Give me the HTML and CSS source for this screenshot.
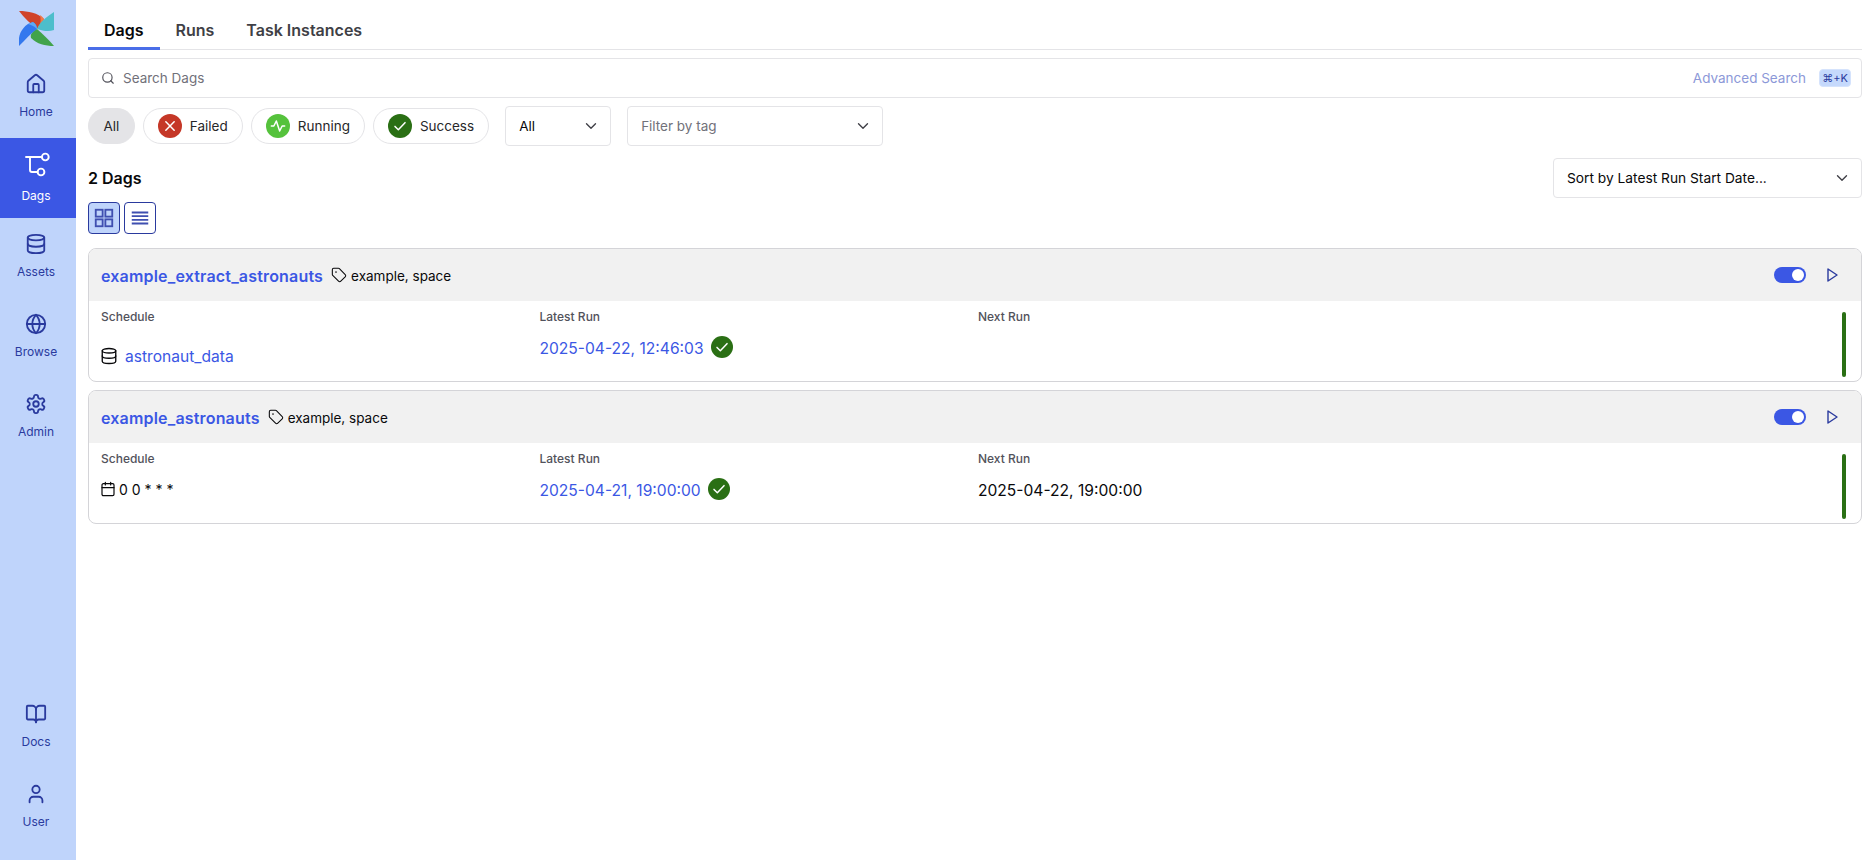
FILE: index.html
```html
<!DOCTYPE html>
<html lang="en">
<head>
    <meta charset="UTF-8">
    <title>Dags</title>
    <link rel="stylesheet" href="styles.css">
</head>
<body>
    <nav class="sidebar">
        <svg class="logo" viewBox="0 0 36 36">
            <path fill="#d0432a" d="M0 0C9 0 19 2 25 8C23 12 20 15 18 18C12 13 5 7 0 0Z"/>
            <path fill="#ef7a4a" d="M21 4C23 5 24 7 25 8C24 11 22 14 20 16C22 12 22 8 21 4Z"/>
            <path fill="#4dbecb" d="M35 1V19C30 21 24 20 18 18C20 12 27 6 35 1Z"/>
            <path fill="#41a34b" d="M35 35C26 35 18 33 12 27C11 24 13 20 18 18C24 23 30 29 35 35Z"/>
            <path fill="#3378ee" d="M0 35V27C1 20 6 13 14 11C17 13 18 15 18 18C12 22 6 29 0 35Z"/>
            <path fill="#5fa9f5" d="M9 13C11 12 13 11 14 11C17 13 18 15 18 18C15 15 12 14 9 13Z"/>
        </svg>
        <a class="nav-item">
            <svg class="nav-icon" viewBox="0 0 24 24"><path d="M15 21v-8a1 1 0 0 0-1-1h-4a1 1 0 0 0-1 1v8"/><path d="M3 10a2 2 0 0 1 .7-1.5l7-6a2 2 0 0 1 2.6 0l7 6A2 2 0 0 1 21 10v9a2 2 0 0 1-2 2H5a2 2 0 0 1-2-2z"/></svg>
            <span>Home</span>
        </a>
        <a class="nav-item active">
            <svg class="nav-icon big" viewBox="0 0 28 28"><circle cx="23.3" cy="7" r="3.4"/><circle cx="19" cy="22" r="3.4"/><path d="M4 7H19.9M8 7V20a2 2 0 0 0 2 2H15.600"/></svg>
            <span>Dags</span>
        </a>
        <a class="nav-item">
            <svg class="nav-icon" viewBox="0 0 24 24"><ellipse cx="12" cy="5" rx="9" ry="3"/><path d="M3 5V19A9 3 0 0 0 21 19V5"/><path d="M3 12A9 3 0 0 0 21 12"/></svg>
            <span>Assets</span>
        </a>
        <a class="nav-item">
            <svg class="nav-icon" viewBox="0 0 24 24"><circle cx="12" cy="12" r="10"/><path d="M12 2a14.5 14.5 0 0 0 0 20 14.5 14.5 0 0 0 0-20"/><path d="M2 12h20"/></svg>
            <span>Browse</span>
        </a>
        <a class="nav-item">
            <svg class="nav-icon" viewBox="0 0 24 24"><path d="M12.22 2h-.44a2 2 0 0 0-2 2v.18a2 2 0 0 1-1 1.73l-.43.25a2 2 0 0 1-2 0l-.15-.08a2 2 0 0 0-2.73.73l-.22.38a2 2 0 0 0 .73 2.73l.15.1a2 2 0 0 1 1 1.72v.51a2 2 0 0 1-1 1.74l-.15.09a2 2 0 0 0-.73 2.73l.22.38a2 2 0 0 0 2.73.73l.15-.08a2 2 0 0 1 2 0l.43.25a2 2 0 0 1 1 1.73V20a2 2 0 0 0 2 2h.44a2 2 0 0 0 2-2v-.18a2 2 0 0 1 1-1.73l.43-.25a2 2 0 0 1 2 0l.15.08a2 2 0 0 0 2.73-.73l.22-.39a2 2 0 0 0-.73-2.73l-.15-.08a2 2 0 0 1-1-1.74v-.5a2 2 0 0 1 1-1.74l.15-.09a2 2 0 0 0 .73-2.73l-.22-.38a2 2 0 0 0-2.73-.73l-.15.08a2 2 0 0 1-2 0l-.43-.25a2 2 0 0 1-1-1.73V4a2 2 0 0 0-2-2z"/><circle cx="12" cy="12" r="3"/></svg>
            <span>Admin</span>
        </a>
        <div class="nav-bottom">
            <a class="nav-item">
                <svg class="nav-icon" viewBox="0 0 24 24"><path d="M12 7v14"/><path d="M3 18a1 1 0 0 1-1-1V4a1 1 0 0 1 1-1h5a4 4 0 0 1 4 4 4 4 0 0 1 4-4h5a1 1 0 0 1 1 1v13a1 1 0 0 1-1 1h-6a3 3 0 0 0-3 3 3 3 0 0 0-3-3z"/></svg>
                <span>Docs</span>
            </a>
            <a class="nav-item">
                <svg class="nav-icon" viewBox="0 0 24 24"><path d="M19 21v-2a4 4 0 0 0-4-4H9a4 4 0 0 0-4 4v2"/><circle cx="12" cy="7" r="4"/></svg>
                <span>User</span>
            </a>
        </div>
    </nav>

    <main class="main">
        <div class="tabs">
            <a class="tab active">Dags</a>
            <a class="tab">Runs</a>
            <a class="tab">Task Instances</a>
        </div>

        <div class="search">
            <svg class="search-icon" viewBox="0 0 24 24"><circle cx="11" cy="11" r="8"/><path d="m21 21-4.3-4.3"/></svg>
            <span class="placeholder">Search Dags</span>
            <span class="advanced">Advanced Search</span>
            <kbd class="kbd">⌘+K</kbd>
        </div>

        <div class="filters">
            <button class="chip chip-all">All</button>
            <button class="chip">
                <span class="state failed"><svg viewBox="0 0 24 24"><path d="M7 7l10 10M17 7L7 17"/></svg></span>Failed
            </button>
            <button class="chip">
                <span class="state running"><svg viewBox="0 0 24 24"><path d="M4 12h3l3-6 4 12 3-6h3"/></svg></span>Running
            </button>
            <button class="chip">
                <span class="state success"><svg viewBox="0 0 24 24"><path d="M6 12.500l4 4 8-8.500"/></svg></span>Success
            </button>
            <div class="select select-all">
                <span>All</span>
                <svg class="chevron" viewBox="0 0 24 24"><path d="m6 9 6 6 6-6"/></svg>
            </div>
            <div class="select select-tag">
                <span class="placeholder">Filter by tag</span>
                <svg class="chevron" viewBox="0 0 24 24"><path d="m6 9 6 6 6-6"/></svg>
            </div>
        </div>

        <div class="list-head">
            <h2 class="count">2 Dags</h2>
            <div class="select select-sort">
                <span>Sort by Latest Run Start Date...</span>
                <svg class="chevron" viewBox="0 0 24 24"><path d="m6 9 6 6 6-6"/></svg>
            </div>
        </div>

        <div class="view-toggle">
            <button class="view-btn active">
                <svg viewBox="0 0 24 24"><rect x="3" y="3" width="7.500" height="7.500"/><rect x="13.500" y="3" width="7.500" height="7.500"/><rect x="3" y="13.500" width="7.500" height="7.500"/><rect x="13.500" y="13.500" width="7.500" height="7.500"/></svg>
            </button>
            <button class="view-btn">
                <svg viewBox="0 0 24 24"><path d="M3 6h18M3 10h18M3 14h18M3 18h18"/></svg>
            </button>
        </div>

        <section class="card">
            <header class="card-head">
                <a class="dag-name">example_extract_astronauts</a>
                <svg class="tag-icon" viewBox="0 0 24 24"><path d="M12.6 2.600A2 2 0 0 0 11.200 2H4a2 2 0 0 0-2 2v7.200a2 2 0 0 0 .6 1.400l8.700 8.700a2.400 2.400 0 0 0 3.400 0l6.600-6.600a2.400 2.400 0 0 0 0-3.400z"/><circle cx="7.500" cy="7.500" r=".5"/></svg>
                <span class="tags">example, space</span>
                <span class="toggle"></span>
                <svg class="play" viewBox="0 0 11 14"><path d="M1 1L10 7 1 13z"/></svg>
            </header>
            <div class="card-body">
                <div class="stats">
                    <div class="stat">
                        <div class="stat-label">Schedule</div>
                        <div class="stat-value asset">
                            <svg class="small-icon" viewBox="0 0 24 24"><ellipse cx="12" cy="5" rx="9" ry="3"/><path d="M3 5V19A9 3 0 0 0 21 19V5"/><path d="M3 12A9 3 0 0 0 21 12"/></svg>
                            <a class="link">astronaut_data</a>
                        </div>
                    </div>
                    <div class="stat">
                        <div class="stat-label">Latest Run</div>
                        <div class="stat-value">
                            <a class="link">2025-04-22, 12:46:03</a>
                            <span class="state success run"><svg viewBox="0 0 24 24"><path d="M6 12.500l4 4 8-8.500"/></svg></span>
                        </div>
                    </div>
                    <div class="stat">
                        <div class="stat-label">Next Run</div>
                    </div>
                </div>
                <div class="run-bar"></div>
            </div>
        </section>

        <section class="card">
            <header class="card-head">
                <a class="dag-name">example_astronauts</a>
                <svg class="tag-icon" viewBox="0 0 24 24"><path d="M12.6 2.600A2 2 0 0 0 11.200 2H4a2 2 0 0 0-2 2v7.200a2 2 0 0 0 .6 1.400l8.700 8.700a2.400 2.400 0 0 0 3.400 0l6.600-6.600a2.400 2.400 0 0 0 0-3.400z"/><circle cx="7.500" cy="7.500" r=".5"/></svg>
                <span class="tags">example, space</span>
                <span class="toggle"></span>
                <svg class="play" viewBox="0 0 11 14"><path d="M1 1L10 7 1 13z"/></svg>
            </header>
            <div class="card-body">
                <div class="stats">
                    <div class="stat">
                        <div class="stat-label">Schedule</div>
                        <div class="stat-value cron">
                            <svg class="small-icon" viewBox="0 0 24 24"><path d="M8 2v4M16 2v4"/><rect x="3" y="4" width="18" height="18" rx="2"/><path d="M3 10h18"/></svg>
                            <span>0 0 * * *</span>
                        </div>
                    </div>
                    <div class="stat">
                        <div class="stat-label">Latest Run</div>
                        <div class="stat-value">
                            <a class="link">2025-04-21, 19:00:00</a>
                            <span class="state success run"><svg viewBox="0 0 24 24"><path d="M6 12.500l4 4 8-8.500"/></svg></span>
                        </div>
                    </div>
                    <div class="stat">
                        <div class="stat-label">Next Run</div>
                        <div class="stat-value">2025-04-22, 19:00:00</div>
                    </div>
                </div>
                <div class="run-bar"></div>
            </div>
        </section>
    </main>
</body>
</html>
```

FILE: styles.css
```css
* {
    box-sizing: border-box;
}
body {
    font-family: Inter, "Noto Sans", sans-serif;
    display: flex;
    height: 100vh;
    margin: 0;
    background-color: #fff;
    color: #09090b;
    font-size: 14px;
    overflow: hidden;
}
svg {
    fill: none;
    stroke: currentColor;
    stroke-width: 2;
    stroke-linecap: round;
    stroke-linejoin: round;
    flex-shrink: 0;
}
button {
    font: inherit;
    color: inherit;
    background: none;
}

/* sidebar */
.sidebar {
    width: 76px;
    flex-shrink: 0;
    display: flex;
    flex-direction: column;
    background-color: #bfd4fb;
    padding-top: 11px;
    padding-bottom: 12px;
    color: #2a3a9e;
}
.logo {
    width: 36px;
    height: 36px;
    margin: 0 0 11px 19px;
    stroke: none;
}
.nav-item {
    height: 80px;
    display: flex;
    flex-direction: column;
    align-items: center;
    padding: 15px 4px 0 0;
    font-size: 12px;
    line-height: 16px;
}
.nav-item span {
    margin-top: 9px;
}
.nav-item.active {
    background-color: #3b57e4;
    color: #fff;
    padding-top: 12px;
}
.nav-icon {
    width: 22px;
    height: 22px;
}
.nav-icon.big {
    width: 28px;
    height: 28px;
    stroke-width: 1.9;
}
.nav-item.active span {
    margin-top: 10px;
}
.nav-bottom {
    margin-top: auto;
}

/* main column */
.main {
    flex: 1;
    min-width: 0;
    padding: 0 12px;
}
.tabs {
    display: flex;
    height: 50px;
    border-bottom: 1px solid #e4e4e7;
}
.tab {
    height: 50px;
    padding: 0 16px;
    font-size: 16px;
    font-weight: 600;
    line-height: 60px;
    color: #3f3f46;
}
.tab.active {
    color: #09090b;
    border-bottom: 3px solid #4a6ee8;
}

.search {
    display: flex;
    align-items: center;
    height: 40px;
    margin-top: 8px;
    padding: 0 10px 0 12px;
    border: 1px solid #e4e4e7;
    border-radius: 4px;
    font-size: 13.5px;
}
.search-icon {
    width: 14px;
    height: 14px;
    color: #52525b;
    margin-right: 8px;
}
.placeholder {
    color: #71717a;
}
.advanced {
    margin-left: auto;
    color: #8c98d8;
}
.kbd {
    margin-left: 13px;
    width: 32px;
    height: 18px;
    border: 1px solid #d5e3fc;
    border-radius: 4px;
    background-color: #c5d9fc;
    color: #2a3a9e;
    font-family: Inter, "DejaVu Sans", sans-serif;
    font-size: 11px;
    line-height: 16px;
    text-align: center;
}

/* filters */
.filters {
    display: flex;
    align-items: center;
    gap: 8px;
    margin-top: 8px;
    height: 40px;
    font-size: 13.5px;
}
.chip {
    display: flex;
    align-items: center;
    gap: 8px;
    height: 36px;
    padding: 0 14px;
    border: 1px solid #e4e4e7;
    border-radius: 18px;
    color: #27272a;
}
.chip-all {
    background-color: #e4e4e7;
    padding: 0 14.5px;
}
.state {
    display: flex;
    width: 24px;
    height: 24px;
    align-items: center;
    justify-content: center;
    border-radius: 50%;
    color: #fff;
}
.state svg {
    width: 20px;
    height: 20px;
    stroke-width: 1.8;
}
.state.failed {
    background-color: #c53727;
}
.state.running {
    background-color: #55c23c;
}
.state.success {
    background-color: #2a6f14;
}
.state.run {
    width: 22px;
    height: 22px;
    margin-top: -3px;
}
.select {
    display: flex;
    align-items: center;
    justify-content: space-between;
    height: 40px;
    padding: 0 10px 0 13px;
    border: 1px solid #e4e4e7;
    border-radius: 4px;
    font-size: 13.5px;
}
.chevron {
    width: 18px;
    height: 18px;
    color: #3f3f46;
    stroke-width: 1.8;
}
.select-all {
    width: 106px;
    margin-left: 8px;
}
.select-tag {
    width: 256px;
    margin-left: 8px;
}

.list-head {
    display: flex;
    align-items: center;
    justify-content: space-between;
    margin-top: 12px;
}
.count {
    margin: 0;
    font-size: 16px;
    font-weight: 600;
}
.select-sort {
    width: 309px;
    font-size: 13.75px;
}
.view-toggle {
    display: flex;
    gap: 4px;
    margin-top: 4px;
}
.view-btn {
    display: flex;
    align-items: center;
    justify-content: center;
    width: 32px;
    height: 32px;
    padding: 0;
    border: 1px solid #2a3a9e;
    border-radius: 4px;
    color: #3f4fb0;
}
.view-btn.active {
    background-color: #bfd4fb;
}
.view-btn svg {
    width: 22px;
    height: 22px;
    stroke-linecap: butt;
    stroke-linejoin: miter;
}

/* dag cards */
.card {
    margin-top: 8px;
    border: 1px solid #d4d4d8;
    border-radius: 8px;
    overflow: hidden;
}
.view-toggle + .card {
    margin-top: 14px;
}
.card-head {
    display: flex;
    align-items: center;
    height: 52px;
    padding: 0 12px;
    background-color: #f1f1f1;
}
.dag-name {
    padding-top: 1px;
    font-size: 16px;
    font-weight: 600;
    letter-spacing: 0.18px;
    color: #3b57e4;
}
.tag-icon {
    width: 16px;
    height: 16px;
    margin-left: 8px;
    stroke-width: 1.6;
}
.tags {
    margin-left: 4px;
    padding-top: 1px;
    font-size: 13.5px;
}
.toggle {
    position: relative;
    width: 32px;
    height: 16px;
    margin-left: auto;
    border-radius: 8px;
    background-color: #3b57e4;
}
.toggle::after {
    content: "";
    position: absolute;
    top: 2px;
    right: 2px;
    width: 12px;
    height: 12px;
    border-radius: 50%;
    background-color: #fff;
}
.play {
    width: 11px;
    height: 14px;
    margin: 0 11px 0 21px;
    color: #2a3a9e;
    stroke-width: 1.4;
}
.card-body {
    display: flex;
    height: 80px;
    padding: 0 15px 0 12px;
}
.stats {
    flex: 1;
    min-width: 0;
    display: grid;
    grid-template-columns: repeat(3, 438.5px) 1fr;
}
.stat {
    padding-top: 8px;
}
.stat-label {
    font-size: 12px;
    font-weight: 500;
    line-height: 16px;
    color: #52525b;
}
.stat-value {
    display: flex;
    align-items: center;
    gap: 7px;
    height: 22px;
    margin-top: 12px;
    font-size: 15.6px;
}
.stat-value.asset {
    margin-top: 20px;
    margin-left: -1px;
}
.stat-value.cron {
    gap: 3px;
    font-size: 14px;
    margin-left: -1px;
    margin-top: 11px;
}
.small-icon {
    width: 18px;
    height: 18px;
    stroke-width: 1.8;
}
.cron .small-icon {
    width: 16px;
    height: 16px;
}
.link {
    color: #3b57e4;
}
.run-bar {
    width: 4px;
    height: 65px;
    margin-top: 11px;
    border-radius: 2px;
    background-color: #2a6f14;
}
```
